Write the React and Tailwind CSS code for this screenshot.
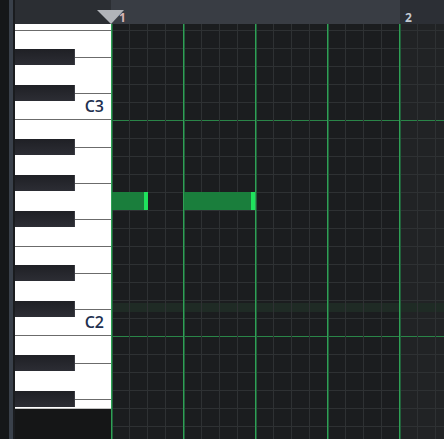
import React from 'react'

const keys = ['E3','D#3','D3','C#3','C3','B2','A#2','A2','G#2','G2','F#2','F2','E2','D#2','D2','C#2','C2','B1','A#1','A1','G#1']

const GRID_W = 333
const GRID_H = 415

function KeyRow({ name }) {
  const black = name.includes('#')
  if (black) {
    return (
      <div className="h-[18px] bg-white flex items-center">
        <div className="w-[60px] h-[16px] bg-gradient-to-b from-[#1f2025] to-[#2c2d34] border-r border-[#3a3b42]" />
        <div className="flex-1 h-px bg-[#6b6b6b]" />
      </div>
    )
  }
  const top = name.startsWith('E') ? 'border-t border-[#6b6b6b]' : ''
  const bottom = name.startsWith('C') ? 'border-b border-[#6b6b6b]' : ''
  return (
    <div className={`h-[18px] bg-white flex items-start justify-end pr-[7px] ${top} ${bottom}`}>
      {name.startsWith('C') && (
        <span className="-mt-[4px] text-[16px] leading-[16px] font-semibold text-[#22304f] font-['Open_Sans',sans-serif]">{name}</span>
      )}
    </div>
  )
}

function Grid() {
  const vlines = []
  for (let x = 0; x <= GRID_W; x += 18) vlines.push(x)
  const hlines = []
  for (let y = 6; y <= GRID_H; y += 18) hlines.push(y)

  return (
    <svg width={GRID_W} height={GRID_H} className="block" shapeRendering="crispEdges">
      <rect x="0" y="0" width={GRID_W} height={GRID_H} fill="#1b1d1f" />
      <rect x="289" y="0" width={GRID_W - 289} height={GRID_H} fill="#212325" />
      <rect x="0" y="279" width={GRID_W} height="9" fill="#1f2b25" />
      {hlines.map((y) => (
        <rect key={'h' + y} x="0" y={y} width={GRID_W} height="1"
          fill={y === 96 || y === 312 ? '#2a8548' : '#2e3133'} />
      ))}
      {vlines.filter((x) => x % 72 !== 0).map((x) => (
        <rect key={'v' + x} x={x} y="0" width="1" height={GRID_H} fill="#2e3133" />
      ))}
      {vlines.filter((x) => x % 72 === 0).map((x) => (
        <g key={'g' + x}>
          <rect x={x} y="0" width="1" height={GRID_H} fill="#2fa055" />
          <rect x={x + 1} y="0" width="1" height={GRID_H} fill="#225f3a" />
        </g>
      ))}
    </svg>
  )
}

function Note({ left, width }) {
  return (
    <div className="absolute top-[168px] h-[18px] flex" style={{ left, width }}>
      <div className="flex-1 bg-[#1a7e3c]" />
      <div className="w-[4px] bg-[#1fe35d]" />
    </div>
  )
}

function App() {
  return (
    <div className="w-[444px] h-[439px] flex bg-[#151719] overflow-hidden">
      {/* left strip */}
      <div className="w-[9px] bg-[#151719]" />
      <div className="w-[4px] bg-[#39404a]" />
      <div className="w-[2px] bg-[#1a1c1f]" />

      <div className="flex-1 flex flex-col">
        {/* timeline */}
        <div className="h-[24px] flex relative">
          <div className="w-[96px] bg-[#2b2e33]" />
          <div className="w-[289px] bg-[#393d44] pl-[8px] pt-[4px]">
            <span className="text-[12px] font-bold text-[#d8b4b4] font-['Open_Sans',sans-serif]">1</span>
          </div>
          <div className="flex-1 bg-[#2c2f35] pl-[5px] pt-[4px]">
            <span className="text-[12px] font-bold text-[#c3c9d2] font-['Open_Sans',sans-serif]">2</span>
          </div>
          <svg className="absolute left-[82px] top-[10px]" width="28" height="14">
            <polygon points="0,0 27,0 14,14" fill="#b1b4b9" />
          </svg>
        </div>

        <div className="flex-1 flex">
          {/* keyboard */}
          <div className="w-[96px] flex flex-col">
            <div className="h-[6px] bg-white" />
            {keys.map((k) => <KeyRow key={k} name={k} />)}
            <div className="h-px bg-[#c4c4c4]" />
            <div className="flex-1 bg-[#151617]" />
          </div>

          {/* note grid */}
          <div className="relative">
            <Grid />
            <Note left={1} width={36} />
            <Note left={73} width={71} />
          </div>
        </div>
      </div>
    </div>
  )
}

export default App
